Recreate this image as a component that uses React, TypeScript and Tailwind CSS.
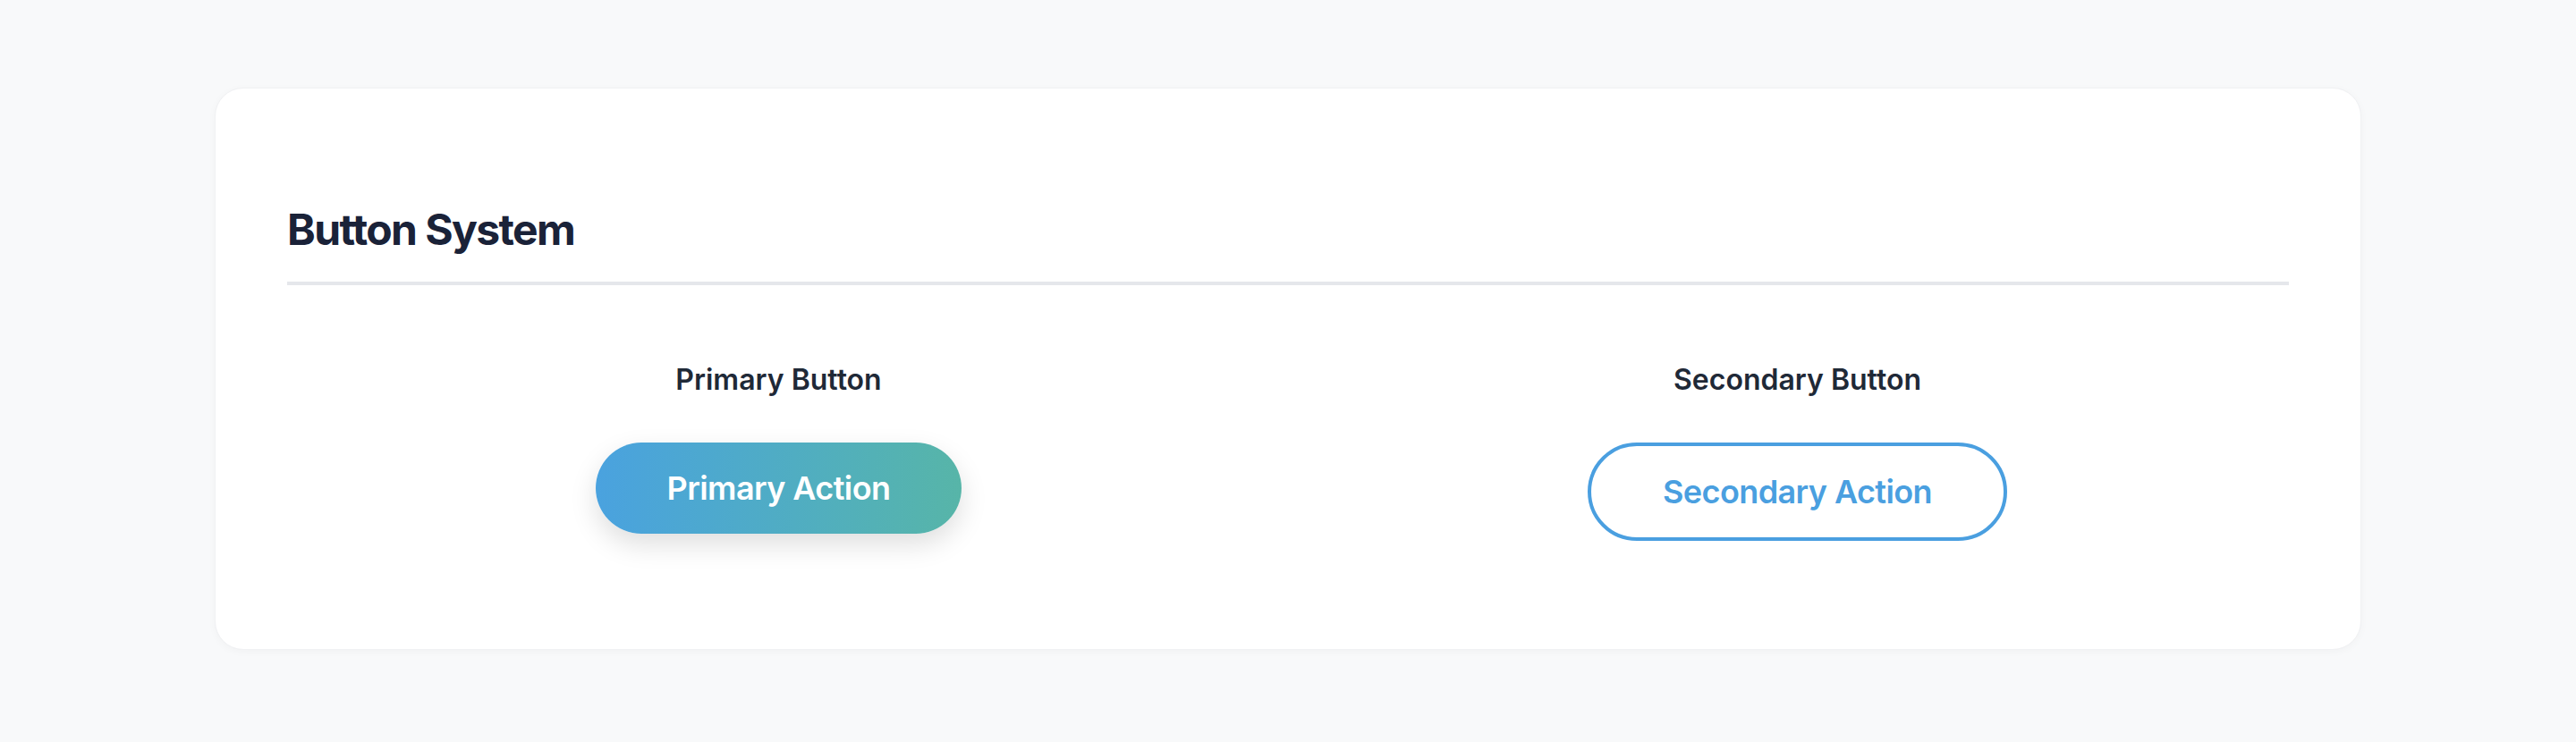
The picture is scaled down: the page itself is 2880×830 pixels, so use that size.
import React from 'react';

export default function App() {
  return (
    <div className="min-h-[830px] w-full bg-[#f8f9fa] pt-[98px] font-['Inter',sans-serif]">
      <div className="mx-auto w-[2400px] rounded-[32px] border border-[#f0f1f3] bg-white px-[80px] pt-[126px] pb-[121px] shadow-[0_2px_10px_rgba(0,0,0,0.03)]">
        <h2 className="border-b-4 border-[#e5e7eb] pb-[26px] text-[48px] leading-[64px] font-bold tracking-[-1.6px] text-[#1a2238]">
          Button System
        </h2>

        <div className="mt-[82px] grid grid-cols-2 gap-10">
          <div className="flex flex-col items-center">
            <h3 className="text-[32px] leading-[48px] font-semibold text-[#1f2937]">Primary Button</h3>
            <button className="mt-[46px] rounded-full bg-gradient-to-r from-[#4aa2df] to-[#57b5a8] px-[80px] py-[23px] text-[36px] leading-[56px] font-semibold tracking-[-0.6px] text-white shadow-[0_12px_30px_rgba(0,0,0,0.13)]">
              Primary Action
            </button>
          </div>

          <div className="flex flex-col items-center">
            <h3 className="text-[32px] leading-[48px] font-semibold text-[#1f2937]">Secondary Button</h3>
            <button className="mt-[46px] rounded-full border-4 border-[#4a9fe0] bg-white px-[80px] py-[23px] text-[36px] leading-[56px] font-semibold tracking-[-0.6px] text-[#4a9fe0]">
              Secondary Action
            </button>
          </div>
        </div>
      </div>
    </div>
  );
}
